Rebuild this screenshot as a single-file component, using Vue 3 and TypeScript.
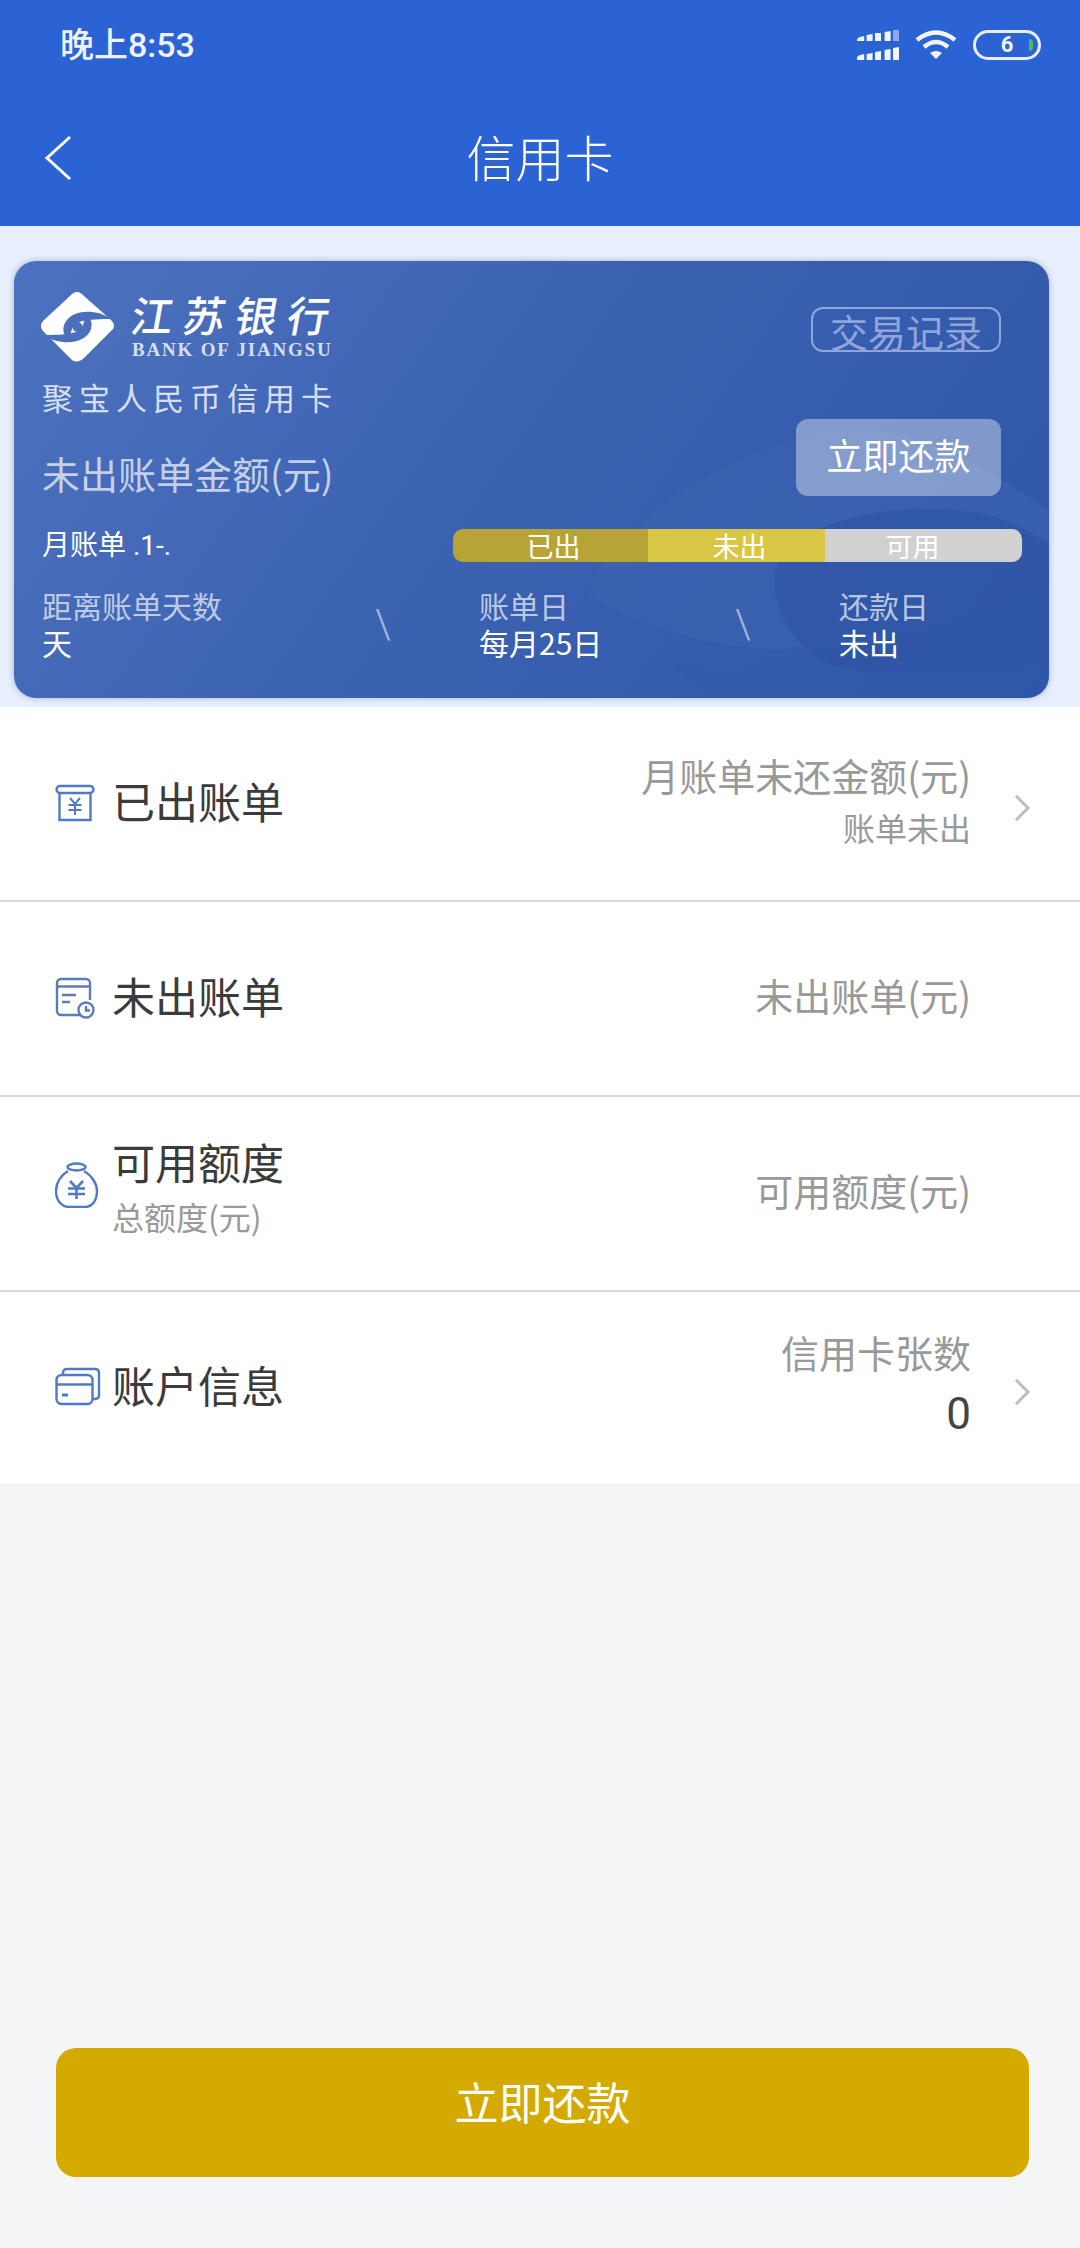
<script setup lang="ts">
interface Stat { label: string; value: string; width: number }
const stats: Stat[] = [
  { label: '距离账单天数', value: '天', width: 335 },
  { label: '账单日', value: '每月25日', width: 258 }
]
</script>

<template>
  <div class="page">
    <header class="head">
      <div class="status">
        <span class="time">晚上8:53</span>
        <div class="status-icons">
          <svg width="42" height="32" viewBox="0 0 35 32" preserveAspectRatio="none" fill="#f1f5ff">
            <path d="M0 11q0-3 6-4v5H0zM13 5v7H8V6zM20 4v8h-5V4zM28 2v10h-5V3z" />
            <path d="M30 1h5v11h-5z" fill="#8aa8ea" />
            <path d="M0 29q0-3 6-4v6H0zM13 24v7H8v-6zM20 22v9h-5v-8zM28 20v11h-5V21zM35 18v13h-5V19z" />
          </svg>
          <svg width="42" height="30" viewBox="0 0 42 30" fill="none" stroke="#f1f5ff" stroke-width="4.5">
            <path d="M2 10Q21-5 40 10" />
            <path d="M9 17Q21 7 33 17" />
            <path d="M21 29l-6-6q6-4 12 0z" fill="#f1f5ff" stroke="none" />
          </svg>
          <div class="battery"><span>6</span><i></i></div>
        </div>
      </div>
      <div class="nav">
        <svg class="back" width="30" height="46" viewBox="0 0 30 46" fill="none" stroke="#fff" stroke-width="3">
          <path d="M27 2 4 23l23 21" stroke-linejoin="miter" />
        </svg>
        <h1>信用卡</h1>
      </div>
    </header>

    <section class="band">
      <div class="card">
        <svg class="swirl" viewBox="0 0 1036 437" width="1036" height="437">
          <path d="M572 332C606 260 706 190 816 170c70-10 150 30 220 80v50c-36 50-136 85-269 88-67 0-147-23-195-56z" fill="#3d63b4" opacity=".5" />
          <path d="M760 320c0-50 90-75 170-72 50 2 90 22 106 37v115c-56 15-136 20-216 5-40-15-60-55-60-85z" fill="#2f54a5" opacity=".7" />
          <path d="M650 400c150 30 300 0 386-80v117H700z" fill="#3459ab" opacity=".45" />
        </svg>

        <div class="upper">
          <div>
            <div class="logo">
              <svg width="75" height="72" viewBox="0 0 75 72">
                <path d="M37 1c3 0 5 2 7 4l27 24c3 3 4 6 2 9L44 67c-4 4-9 5-13 1L4 41c-4-4-4-8 0-12L30 5c2-2 4-4 7-4z" fill="#fff" />
                <path d="M72 28C55 17 30 18 24 34c-2 8 1 12 6 13 1-8 3-14 9-16 10-3 23-3 33-3z" fill="#4a70bd" />
                <path d="M3 44c17 11 42 10 48-6 2-8-1-12-6-13-1 8-3 14-9 16-10 3-23 3-33 3z" fill="#4a70bd" />
                <circle cx="37.500" cy="36" r="5" fill="#4a70bd" />
              </svg>
              <div class="logo-text">
                <div class="logo-cn">江苏银行</div>
                <div class="logo-en">BANK OF JIANGSU</div>
              </div>
            </div>
            <div class="product">聚宝人民币信用卡</div>
            <div class="amount">未出账单金额(元)</div>
          </div>
          <div class="actions">
            <div class="record">交易记录</div>
            <div class="repay">立即还款</div>
          </div>
        </div>

        <div class="month">
          <span class="month-label">月账单 .1-.</span>
          <div class="bar">
            <span class="seg s1">已出</span>
            <span class="seg s2">未出</span>
            <span class="seg s3">可用</span>
          </div>
        </div>

        <div class="stats">
          <template v-for="s in stats" :key="s.label">
            <div class="stat" :style="{ width: s.width + 'px' }">
              <div class="stat-label">{{ s.label }}</div>
              <div class="stat-value">{{ s.value }}</div>
            </div>
            <span class="slash">\</span>
          </template>
          <div class="stat">
            <div class="stat-label">还款日</div>
            <div class="stat-value">未出</div>
          </div>
        </div>
      </div>
    </section>

    <section class="list">
      <div class="row">
        <svg class="icon" width="46" height="46" viewBox="0 0 46 46" fill="none" stroke="#5079c8" stroke-width="2.4">
          <rect x="1.500" y="4" width="37" height="7" rx="3.500" />
          <path d="M4.500 10v28h31V10" />
          <path d="M15 16l5 6 5-6M13.500 23h13M13.500 28h13M20 22v11" stroke-width="2" />
        </svg>
        <div class="left"><div class="label">已出账单</div></div>
        <div class="right">
          <div class="r-main">月账单未还金额(元)</div>
          <div class="r-sub">账单未出</div>
        </div>
        <svg class="chev" width="18" height="30" viewBox="0 0 18 30" fill="none" stroke="#bdbdbd" stroke-width="3">
          <path d="M3 3l12 12L3 27" />
        </svg>
      </div>

      <div class="row">
        <svg class="icon" width="46" height="46" viewBox="0 0 46 46" fill="none" stroke="#5d7db5" stroke-width="2.4">
          <path d="M26 38H6a4 4 0 0 1-4-4V6a4 4 0 0 1 4-4h25a4 4 0 0 1 4 4v17" />
          <path d="M2 9.500h33" />
          <path d="M7 18h14M7 25h8" />
          <circle cx="31" cy="33" r="7.500" />
          <path d="M31 29v4.500h4" />
        </svg>
        <div class="left"><div class="label">未出账单</div></div>
        <div class="right"><div class="r-main">未出账单(元)</div></div>
        <span class="chev-space"></span>
      </div>

      <div class="row">
        <svg class="icon bag" width="46" height="46" viewBox="0 0 46 46" fill="none" stroke="#5079c8" stroke-width="2.4">
          <ellipse cx="21.500" cy="5" rx="9" ry="3.500" />
          <path d="M13 9C6 13 1 21 1 29c0 11 7 16 13 16h16c6 0 12-5 12-16 0-8-6-16-13-20" />
          <path d="M15 19l6.500 7 6.500-7M13 26.500h17M13 32h17M21.500 26v11" stroke-width="2.600" />
        </svg>
        <div class="left stacked">
          <div class="label">可用额度</div>
          <div class="l-sub">总额度(元)</div>
        </div>
        <div class="right"><div class="r-main">可用额度(元)</div></div>
        <span class="chev-space"></span>
      </div>

      <div class="row last">
        <svg class="icon" width="46" height="46" viewBox="0 0 46 46" fill="none" stroke="#5079c8" stroke-width="2.4">
          <path d="M8 9V7q0-4 4-4h28q4 0 4 4v22q0 4-4 4h-3" />
          <rect x="1.500" y="9" width="36" height="29" rx="5" />
          <path d="M1.500 18.500h36" />
          <path d="M7 29h6" stroke-width="3" />
        </svg>
        <div class="left"><div class="label">账户信息</div></div>
        <div class="right">
          <div class="r-main">信用卡张数</div>
          <div class="r-num">0</div>
        </div>
        <svg class="chev" width="18" height="30" viewBox="0 0 18 30" fill="none" stroke="#bdbdbd" stroke-width="3">
          <path d="M3 3l12 12L3 27" />
        </svg>
      </div>
    </section>

    <div class="foot">
      <div class="pay">立即还款</div>
    </div>
  </div>
</template>

<style scoped>
* { box-sizing: border-box; }
.page {
  width: 1080px;
  min-height: 2248px;
  display: flex;
  flex-direction: column;
  background: #f4f5f7;
  font-family: "Noto Sans CJK SC", "Noto Sans", sans-serif;
}
.head { height: 226px; background: #2b63d4; color: #fff; }
.status {
  height: 90px;
  padding: 0 39px 0 60px;
  display: flex;
  align-items: center;
  justify-content: space-between;
}
.time {
  margin-top: -5px;
  font-family: Roboto, "Noto Sans CJK SC", sans-serif;
  font-size: 34px;
  font-weight: 500;
  color: #eef3ff;
}
.status-icons { display: flex; align-items: center; gap: 16px; }
.battery {
  position: relative;
  width: 68px;
  height: 30px;
  border: 3px solid #e8eefc;
  border-radius: 15px;
  display: flex;
  align-items: center;
  justify-content: center;
  font: 700 22px/1 Roboto, sans-serif;
  color: #f1f5ff;
}
.battery i {
  position: absolute;
  right: 5px;
  top: 6px;
  width: 4px;
  height: 12px;
  border-radius: 0 4px 4px 0;
  background: #4db85c;
}
.nav {
  position: relative;
  height: 136px;
  display: flex;
  align-items: center;
  justify-content: center;
  padding-bottom: 6px;
}
.back { position: absolute; left: 43px; top: 45px; }
.nav h1 { margin: 0; font-size: 49px; font-weight: 300; line-height: 1; }

.band { height: 481px; background: #e8effc; padding: 35px 31px 0 14px; }
.card {
  position: relative;
  height: 437px;
  overflow: hidden;
  border-radius: 22px;
  padding: 28px 27px 0 28px;
  color: #fff;
  background: linear-gradient(125deg, #4c72bf 0%, #3c62b2 45%, #2f55a8 100%);
  box-shadow: 0 0 6px rgba(40, 70, 140, 0.35);
}
.swirl { position: absolute; left: 0; top: 0; }
.upper, .month, .stats { position: relative; }
.upper { display: flex; justify-content: space-between; height: 209px; }
.logo { display: flex; align-items: center; gap: 17px; height: 75px; margin-left: -2px; }
.logo-cn {
  font-family: "Noto Sans CJK TC", sans-serif;
  font-size: 42px;
  line-height: 44px;
  font-weight: 500;
  letter-spacing: 10px;
  transform: skewX(-10deg);
  white-space: nowrap;
}
.logo-en {
  margin-top: 3px;
  font-family: "Liberation Serif", serif;
  font-size: 19px;
  line-height: 22px;
  font-weight: 700;
  letter-spacing: 1.800px;
  color: #d5def2;
  white-space: nowrap;
}
.product {
  margin-top: 11px;
  font-size: 31px;
  line-height: 44px;
  letter-spacing: 6px;
  color: rgba(255, 255, 255, 0.8);
  white-space: nowrap;
}
.amount {
  margin-top: 29px;
  font-size: 38px;
  line-height: 50px;
  color: rgba(255, 255, 255, 0.7);
  white-space: nowrap;
}
.actions {
  display: flex;
  flex-direction: column;
  align-items: flex-end;
  margin-right: 21px;
}
.record {
  margin-top: 18px;
  width: 190px;
  height: 45px;
  overflow: hidden;
  border: 2px solid #8fa6dc;
  border-radius: 12px;
  text-align: center;
  font-size: 38px;
  line-height: 44px;
  color: #8fa6dc;
  white-space: nowrap;
}
.repay {
  margin-top: 67px;
  width: 205px;
  height: 77px;
  border-radius: 12px;
  background: rgba(255, 255, 255, 0.38);
  text-align: center;
  font-size: 36px;
  line-height: 70px;
}
.month { display: flex; align-items: center; margin-top: 31px; height: 33px; }
.month-label {
  flex: 0 0 411px;
  font-family: Roboto, "Noto Sans CJK SC", sans-serif;
  font-size: 28px;
  line-height: 33px;
}
.bar { flex: 1; display: flex; height: 33px; }
.seg { text-align: center; font-size: 27px; line-height: 33px; color: #fff; }
.s1 { width: 195px; padding-left: 6px; background: #b8a336; border-radius: 10px 0 0 10px; }
.s2 { width: 177px; padding-left: 6px; background: #d9c645; }
.s3 { flex: 1; padding-right: 22px; background: #d1d1d1; border-radius: 0 10px 10px 0; }
.stats { display: flex; margin-top: 25px; }
.stat { flex: none; }
.stat-label { font-size: 30px; line-height: 37px; color: rgba(255, 255, 255, 0.68); white-space: nowrap; }
.stat-value { font-size: 30px; line-height: 37px; color: #fff; white-space: nowrap; }
.slash {
  flex: 0 0 104px;
  margin: 18px 0 0 -2px;
  font-family: Roboto, sans-serif;
  font-weight: 300;
  font-size: 40px;
  line-height: 40px;
  height: 40px;
  color: rgba(255, 255, 255, 0.55);
}

.list { background: #fff; }
.row {
  display: flex;
  align-items: center;
  height: 195px;
  padding: 0 49px 8px 55px;
  border-bottom: 2px solid #d9d9d9;
}
.row.last { height: 191px; border-bottom: 0; }
.icon { flex: none; margin: 10px 11px 0 0; }
.icon.bag { margin-top: -10px; }
.left { flex: 1; }
.left.stacked { margin-bottom: 12px; }
.label { font-size: 43px; line-height: 58px; color: #3b3b3b; }
.l-sub { margin-top: 6px; font-size: 32px; line-height: 40px; color: #999; }
.right { text-align: right; }
.r-main { font-size: 38px; line-height: 52px; color: #999; }
.r-sub { font-size: 32px; line-height: 48px; color: #999; margin-top: 2px; }
.r-num { margin-top: 8px; font-family: Roboto, sans-serif; font-size: 44px; line-height: 56px; color: #444; }
.chev { flex: none; margin-left: 42px; margin-top: 16px; }
.chev-space { flex: 0 0 60px; }

.foot { margin-top: auto; padding: 0 51px 71px 56px; }
.pay {
  height: 129px;
  border-radius: 20px;
  background: #d4aa00;
  color: #fff;
  text-align: center;
  font-size: 44px;
  line-height: 107px;
}
</style>
